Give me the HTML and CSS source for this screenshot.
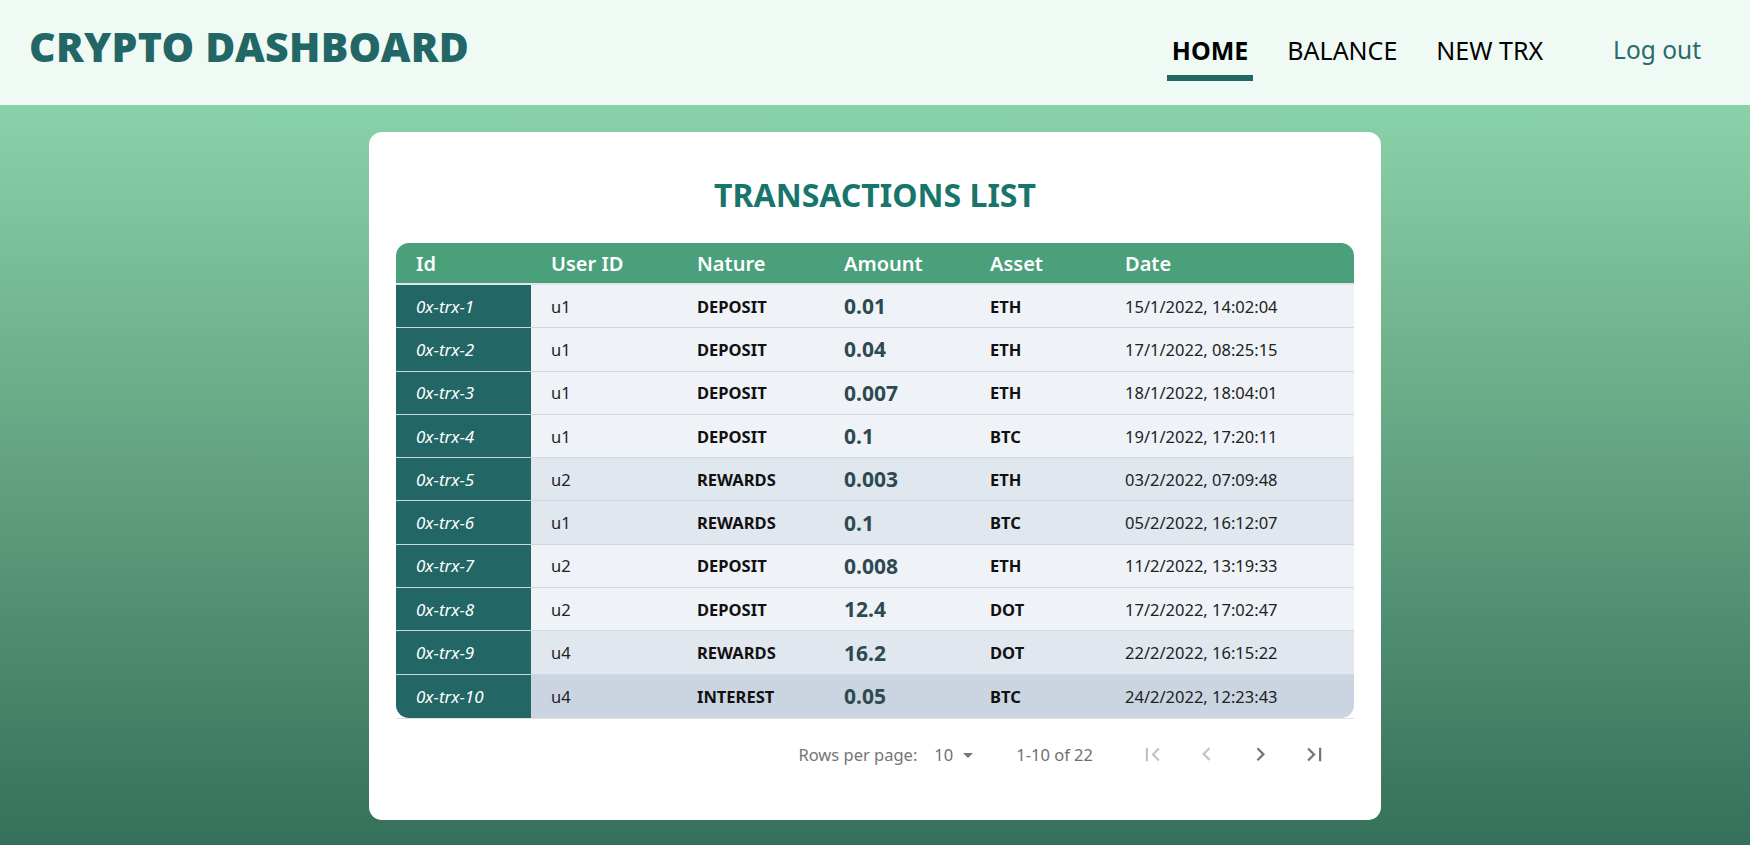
FILE: index.html
```html
<!DOCTYPE html>
<html lang="en">
<head>
<meta charset="utf-8">
<title>Crypto Dashboard</title>
<link rel="stylesheet" href="styles.css">
</head>
<body>
<header class="topbar">
  <h1 class="brand">CRYPTO DASHBOARD</h1>
  <nav class="nav">
    <a class="nav-item active">HOME</a>
    <a class="nav-item">BALANCE</a>
    <a class="nav-item">NEW TRX</a>
    <a class="logout">Log out</a>
  </nav>
</header>
<main class="main">
  <section class="card">
    <h2 class="card-title">TRANSACTIONS LIST</h2>
    <table class="trx">
      <colgroup>
        <col class="c-id"><col class="c-user"><col class="c-nature"><col class="c-amount"><col class="c-asset"><col class="c-date">
      </colgroup>
      <thead>
        <tr><th>Id</th><th>User ID</th><th>Nature</th><th>Amount</th><th>Asset</th><th>Date</th></tr>
      </thead>
      <tbody>
        <tr class="deposit"><td class="id">0x-trx-1</td><td>u1</td><td class="b">DEPOSIT</td><td class="amt">0.01</td><td class="b">ETH</td><td>15/1/2022, 14:02:04</td></tr>
        <tr class="deposit"><td class="id">0x-trx-2</td><td>u1</td><td class="b">DEPOSIT</td><td class="amt">0.04</td><td class="b">ETH</td><td>17/1/2022, 08:25:15</td></tr>
        <tr class="deposit"><td class="id">0x-trx-3</td><td>u1</td><td class="b">DEPOSIT</td><td class="amt">0.007</td><td class="b">ETH</td><td>18/1/2022, 18:04:01</td></tr>
        <tr class="deposit"><td class="id">0x-trx-4</td><td>u1</td><td class="b">DEPOSIT</td><td class="amt">0.1</td><td class="b">BTC</td><td>19/1/2022, 17:20:11</td></tr>
        <tr class="rewards"><td class="id">0x-trx-5</td><td>u2</td><td class="b">REWARDS</td><td class="amt">0.003</td><td class="b">ETH</td><td>03/2/2022, 07:09:48</td></tr>
        <tr class="rewards"><td class="id">0x-trx-6</td><td>u1</td><td class="b">REWARDS</td><td class="amt">0.1</td><td class="b">BTC</td><td>05/2/2022, 16:12:07</td></tr>
        <tr class="deposit"><td class="id">0x-trx-7</td><td>u2</td><td class="b">DEPOSIT</td><td class="amt">0.008</td><td class="b">ETH</td><td>11/2/2022, 13:19:33</td></tr>
        <tr class="deposit"><td class="id">0x-trx-8</td><td>u2</td><td class="b">DEPOSIT</td><td class="amt">12.4</td><td class="b">DOT</td><td>17/2/2022, 17:02:47</td></tr>
        <tr class="rewards"><td class="id">0x-trx-9</td><td>u4</td><td class="b">REWARDS</td><td class="amt">16.2</td><td class="b">DOT</td><td>22/2/2022, 16:15:22</td></tr>
        <tr class="interest last"><td class="id">0x-trx-10</td><td>u4</td><td class="b">INTEREST</td><td class="amt">0.05</td><td class="b">BTC</td><td>24/2/2022, 12:23:43</td></tr>
      </tbody>
    </table>
    <div class="pager">
      <span class="pager-label">Rows per page:</span>
      <span class="pager-select">10
        <svg class="drop" viewBox="0 0 24 24" width="24" height="24"><path d="M7 10l5 5 5-5z"/></svg>
      </span>
      <span class="pager-range">1-10 of 22</span>
      <div class="pager-btns">
        <svg class="pbtn off" viewBox="0 0 24 24" width="27" height="27"><path d="M18.41 16.59L13.82 12l4.59-4.59L17 6l-6 6 6 6zM6 6h2v12H6z"/></svg>
        <svg class="pbtn off" viewBox="0 0 24 24" width="27" height="27"><path d="M15.41 16.09l-4.58-4.59 4.58-4.59L14 5.5l-6 6 6 6z"/></svg>
        <svg class="pbtn" viewBox="0 0 24 24" width="27" height="27"><path d="M8.59 16.34l4.58-4.59-4.58-4.59L10 5.75l6 6-6 6z"/></svg>
        <svg class="pbtn" viewBox="0 0 24 24" width="27" height="27"><path d="M5.59 7.41L10.18 12l-4.59 4.59L7 18l6-6-6-6zM16 6h2v12h-2z"/></svg>
      </div>
    </div>
  </section>
</main>
</body>
</html>
```
FILE: styles.css
```css
* { box-sizing: border-box; }
html, body { margin: 0; padding: 0; }
body {
  font-family: "Noto Sans", "Open Sans", sans-serif;
  background: #35705a;
  min-height: 845px;
}
.topbar {
  height: 105px;
  background: #f0faf5;
  display: flex;
  align-items: flex-start;
  justify-content: space-between;
  padding: 0 49px 0 29px;
}
.brand {
  margin: 18px 0 0;
  font-size: 41px;
  font-weight: 900;
  color: #226666;
  letter-spacing: 0.3px;
  line-height: 56px;
}
.nav {
  display: flex;
  align-items: flex-start;
  margin-top: 34px;
}
.nav-item {
  font-size: 25px;
  color: #000;
  line-height: 32px;
  padding: 0 0 9px;
  margin-right: 39px;
  border-bottom: 6px solid transparent;
}
.nav-item.active {
  font-weight: 700;
  border-bottom-color: #226666;
  padding: 0 5px 9px;
  margin-right: 34px;
}
.nav-item:nth-child(3) { margin-right: 0; }
.logout {
  font-size: 24.5px;
  line-height: 32px;
  color: #2a6b6b;
  margin-left: 70px;
}
.main {
  height: 740px;
  background: linear-gradient(180deg, #8ad2a9 0%, #6aab88 40%, #35705a 100%);
  padding-top: 27px;
}
.card {
  width: 1012px;
  height: 688px;
  margin: 0 auto;
  background: #fff;
  border-radius: 13px;
  padding: 43px 27px 0 27px;
}
.card-title {
  margin: 0 0 28px;
  text-align: center;
  font-size: 32px;
  font-weight: 700;
  color: #17756b;
  line-height: 40px;
}
.trx {
  width: 958px;
  table-layout: fixed;
  border-collapse: separate;
  border-spacing: 0;
  border-bottom: 1px solid #e0e0e0;
}
.c-id { width: 135px; }
.c-user { width: 146px; }
.c-nature { width: 147px; }
.c-amount { width: 146px; }
.c-asset { width: 135px; }
.c-date { width: 249px; }
.trx th {
  background: #49a07a;
  color: #fff;
  text-align: left;
  font-size: 20px;
  font-weight: 600;
  height: 42px;
  padding: 0 0 0 20px;
  border-bottom: 2px solid #e2e6ea;
}
.trx th:first-child { border-top-left-radius: 13px; }
.trx th:last-child { border-top-right-radius: 13px; }
.trx td {
  height: 43.3px;
  padding: 0 0 0 20px;
  font-size: 16.5px;
  color: #222;
  border-bottom: 1px solid #d3d9e1;
  white-space: nowrap;
}
.trx tr.last td { border-bottom: none; }
.trx td.id {
  background: #226666;
  color: #fff;
  font-style: italic;
  font-size: 17px;
  border-bottom-color: #c9d6d6;
}
.trx td.b { font-weight: 700; color: #111; font-size: 16.5px; }
.trx td.amt { font-size: 21px; font-weight: 700; color: #2e4a50; }
.deposit td { background: #eff3f8; }
.rewards td { background: #e1e7ef; }
.interest td { background: #cbd5e1; }
.trx tr.last td:first-child { border-bottom-left-radius: 13px; }
.trx tr.last td:last-child { border-bottom-right-radius: 13px; }
.pager {
  display: flex;
  align-items: center;
  justify-content: flex-end;
  height: 72px;
  font-size: 16.5px;
  color: #757575;
}
.pager-label { margin-right: 17px; }
.pager-select {
  display: flex;
  align-items: center;
  color: #6f6f6f;
  margin-right: 36px;
}
.drop { fill: #757575; width: 24px; height: 24px; margin-left: 3px; }
.pager-range { margin-right: 46px; color: #6f6f6f; }
.pager-btns {
  display: flex;
  gap: 27px;
  margin-right: 26px;
}
.pbtn { fill: #757575; }
.pbtn.off { fill: #c4c4c4; }
```
